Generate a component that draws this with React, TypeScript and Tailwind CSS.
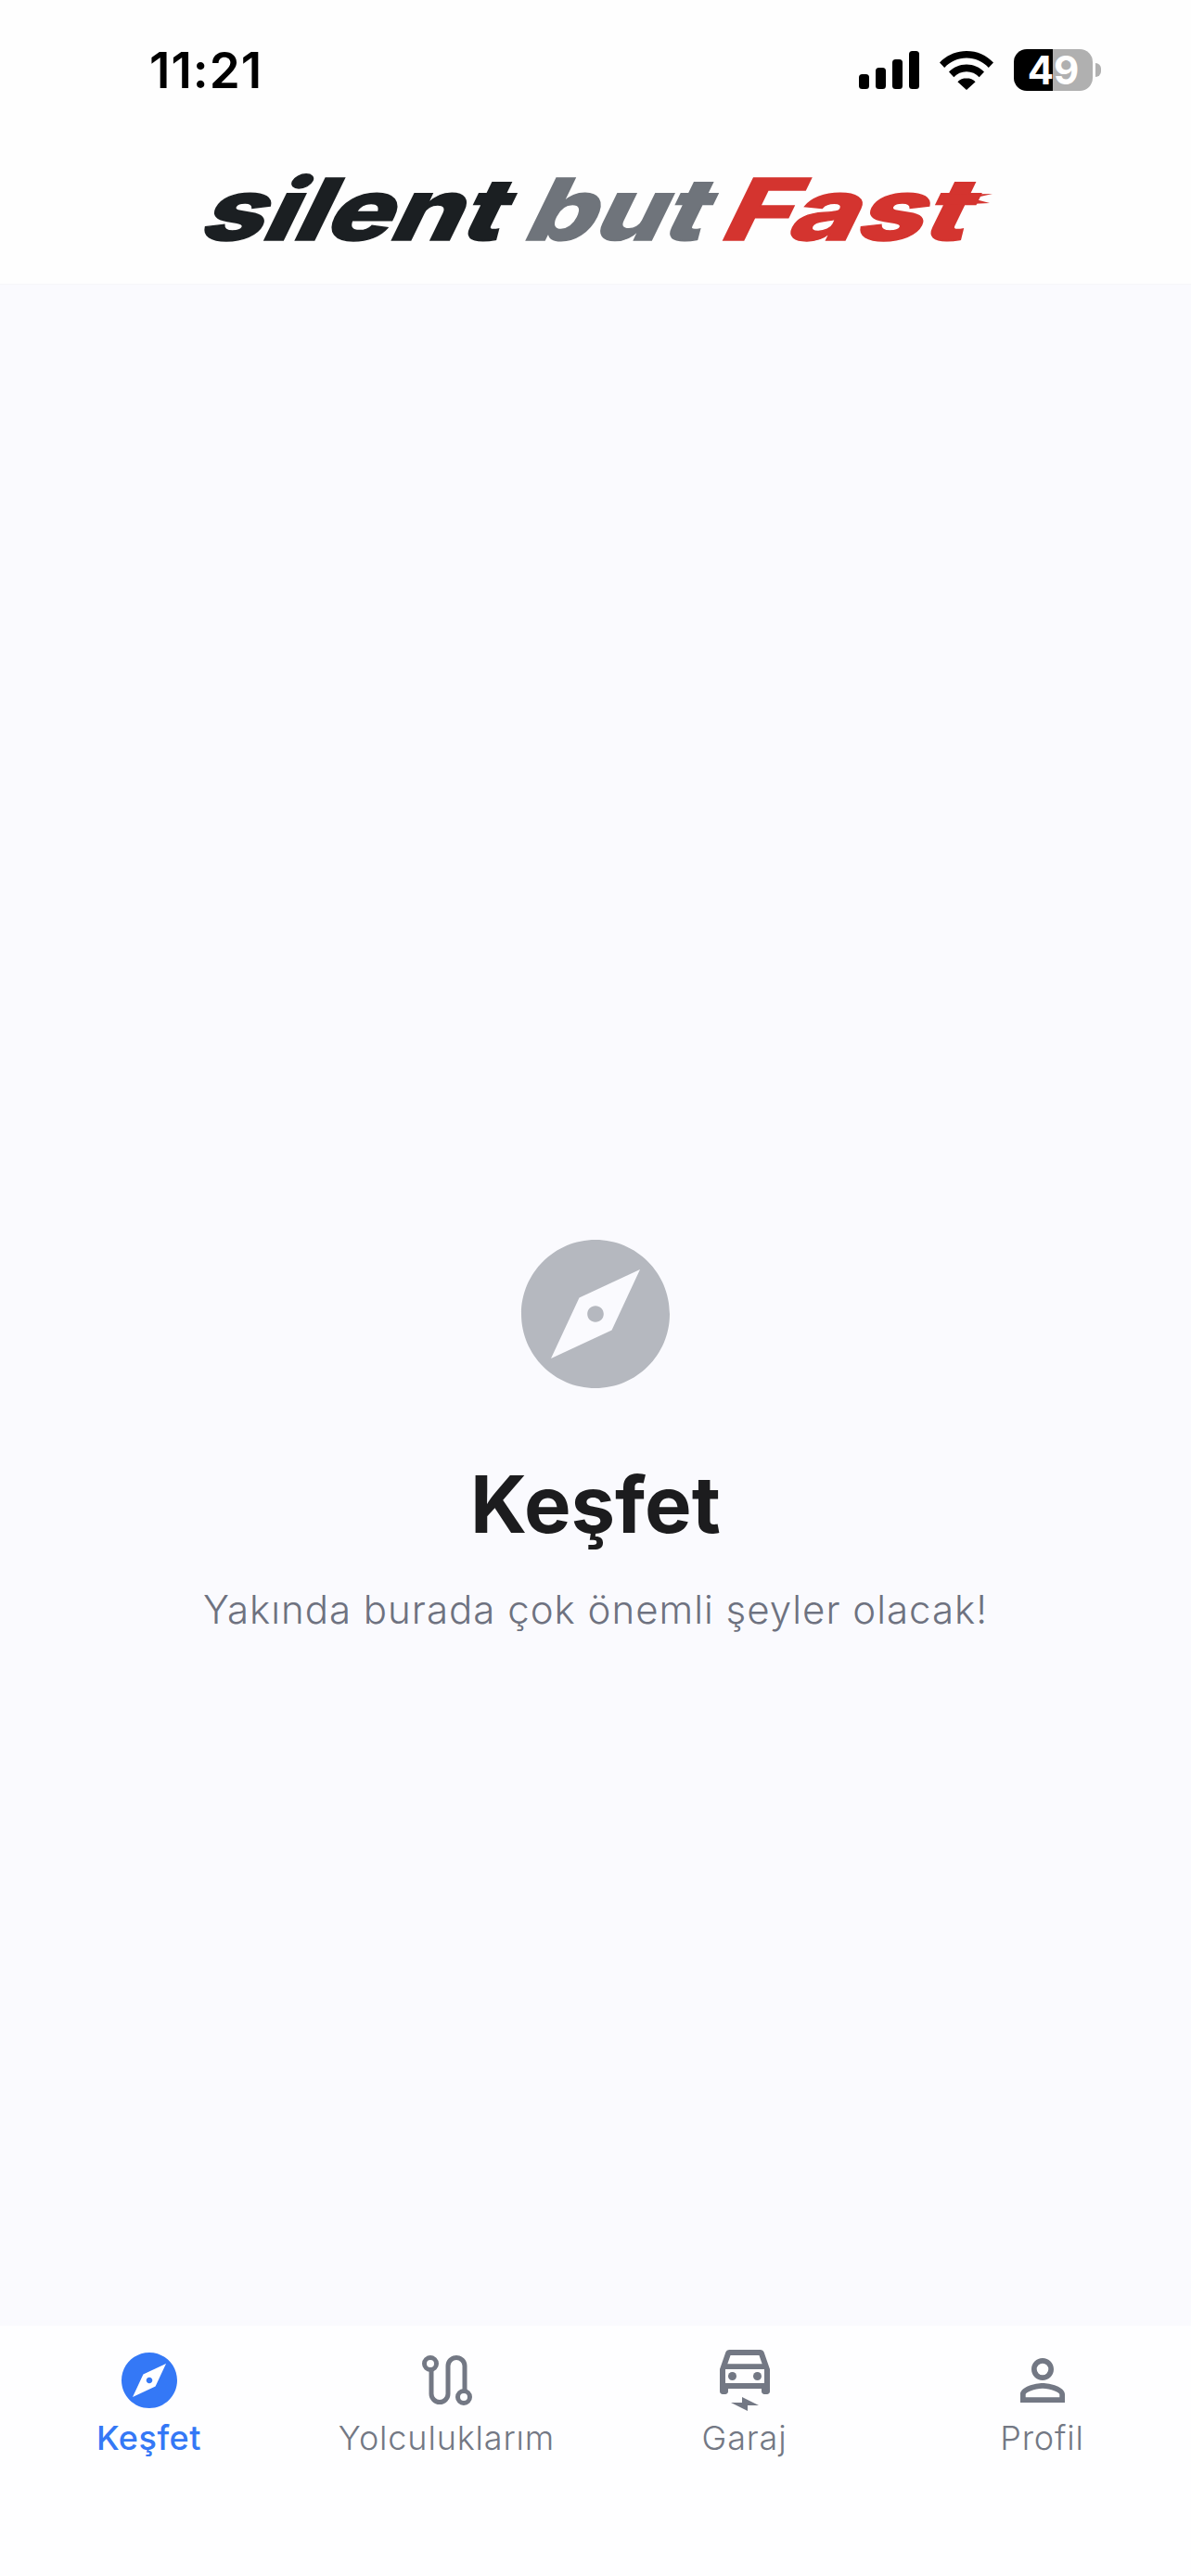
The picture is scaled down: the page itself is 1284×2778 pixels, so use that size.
import { MdExplore, MdOutlineElectricCar, MdPersonOutline } from 'react-icons/md';

const font = { fontFamily: 'Inter, "Liberation Sans", sans-serif' };

// Hand drawn since Material has no matching route icon
function RouteIcon() {
  return (
    <svg viewBox="0 0 72 72" className="w-[72px] h-[72px]" fill="none" stroke="#737884" strokeWidth="5">
      <circle cx="18" cy="18" r="6.5" />
      <circle cx="54" cy="54" r="6.5" />
      <path d="M19 24.5V50.5a9 9 0 0 0 18 0V20.5a9 9 0 0 1 18 0V47.5" />
    </svg>
  );
}

function StatusBar() {
  return (
    <div className="flex items-center justify-between pt-[53px] pl-[161px] pr-[97px] h-[98px]">
      <span className="pt-[2px] text-[53px] leading-[45px] font-semibold text-black tracking-[1px]">11:21</span>
      <div className="flex items-center gap-[22px]">
        <svg viewBox="0 0 65 41" className="w-[65px] h-[41px]" fill="#000">
          <rect x="0" y="25" width="11" height="16" rx="3.5" />
          <rect x="18" y="18" width="11" height="23" rx="3.5" />
          <rect x="36" y="9" width="11" height="32" rx="3.5" />
          <rect x="54" y="0" width="11" height="41" rx="3.5" />
        </svg>
        <svg viewBox="0 0 58 42" className="w-[58px] h-[42px]" fill="#000">
          <path d="M29 0C17.5 0 7.6 4.6 0 12.4l5.2 5.6C11.6 11.4 19.8 7.6 29 7.6s17.4 3.8 23.8 10.4l5.2-5.6C50.4 4.6 40.5 0 29 0z" />
          <path d="M29 14.6c-7.6 0-14.2 3.1-19 8l5.3 5.6c3.5-3.6 8.3-5.9 13.7-5.9s10.2 2.3 13.7 5.9l5.3-5.6c-4.8-4.9-11.4-8-19-8z" />
          <path d="M29 29.2c-3.8 0-7.1 1.5-9.6 4L29 42l9.6-8.8c-2.5-2.5-5.8-4-9.6-4z" />
        </svg>
        <div className="flex items-center">
          <div className="relative w-[85px] h-[45px]">
            <div className="flex h-full rounded-[14px] overflow-hidden">
              <div className="w-[42px] bg-black" />
              <div className="flex-1 bg-[#b0b0b0]" />
            </div>
            <span className="absolute inset-0 flex items-center justify-center text-[42px] leading-none font-bold text-white">
              49
            </span>
          </div>
          <div className="ml-[3px] w-[6px] h-[15px] rounded-r-full bg-[#b0b0b0]" />
        </div>
      </div>
    </div>
  );
}

function Logo() {
  return (
    <svg viewBox="0 0 860 90" className="w-[860px] h-[90px] overflow-visible" fontFamily="Inter, sans-serif" fontWeight="800" fontSize="92">
      <g transform="translate(-1 79) skewX(-26)">
        <text fill="#1b1f22" stroke="#1b1f22" strokeWidth="1.5" textLength="325" lengthAdjust="spacingAndGlyphs">silent</text>
      </g>
      <g transform="translate(349 79) skewX(-26)">
        <text fill="#6f747b" stroke="#6f747b" strokeWidth="1.5" textLength="192" lengthAdjust="spacingAndGlyphs">but</text>
      </g>
      <g transform="translate(561 79) skewX(-26)">
        <text fill="#d4342f" stroke="#d4342f" strokeWidth="1.5" textLength="264" lengthAdjust="spacingAndGlyphs">Fast</text>
      </g>
      {/* speed flames on the last letter */}
      <path d="M812 30L858 29L836 34L855 39L812 41Z" fill="#d4342f" />
    </svg>
  );
}

const tabs = [
  { label: 'Keşfet', icon: <MdExplore size={72} color="#3478f6" />, active: true },
  { label: 'Yolculuklarım', icon: <RouteIcon />, active: false },
  { label: 'Garaj', icon: <MdOutlineElectricCar size={72} color="#737884" />, active: false },
  { label: 'Profil', icon: <MdPersonOutline size={72} color="#737884" />, active: false },
];

export default function App() {
  return (
    <div className="flex flex-col w-[1284px] h-[2778px] bg-[#fafafe]" style={font}>
      {/* Header */}
      <header className="h-[307px] bg-[#fefefe] border-b border-[#f6f6f9]">
        <StatusBar />
        <div className="flex justify-center mt-[82px]">
          <Logo />
        </div>
      </header>

      {/* Empty state */}
      <main className="flex-1 flex flex-col items-center pt-[1014px]">
        <MdExplore size={192} color="#b5b8bf" />
        <h1 className="mt-[60px] text-[85px] leading-[100px] font-bold text-[#1c1c1e]">Keşfet</h1>
        <p className="mt-[35px] text-[42px] leading-[56px] font-light text-[#6e7280] tracking-[1px]">
          Yakında burada çok önemli şeyler olacak!
        </p>
      </main>

      {/* Tab bar */}
      <nav className="grid grid-cols-4 h-[270px] pt-[23px] bg-[#fefeff]">
        {tabs.map((tab) => (
          <div key={tab.label} className="flex flex-col items-center">
            {tab.icon}
            <span
              className={`mt-[4px] text-[36px] leading-[44px] ${
                tab.active ? 'text-[#3478f6] font-medium tracking-[0.5px]' : 'text-[#737884] font-light tracking-[0.85px]'
              }`}
            >
              {tab.label}
            </span>
          </div>
        ))}
      </nav>
    </div>
  );
}
